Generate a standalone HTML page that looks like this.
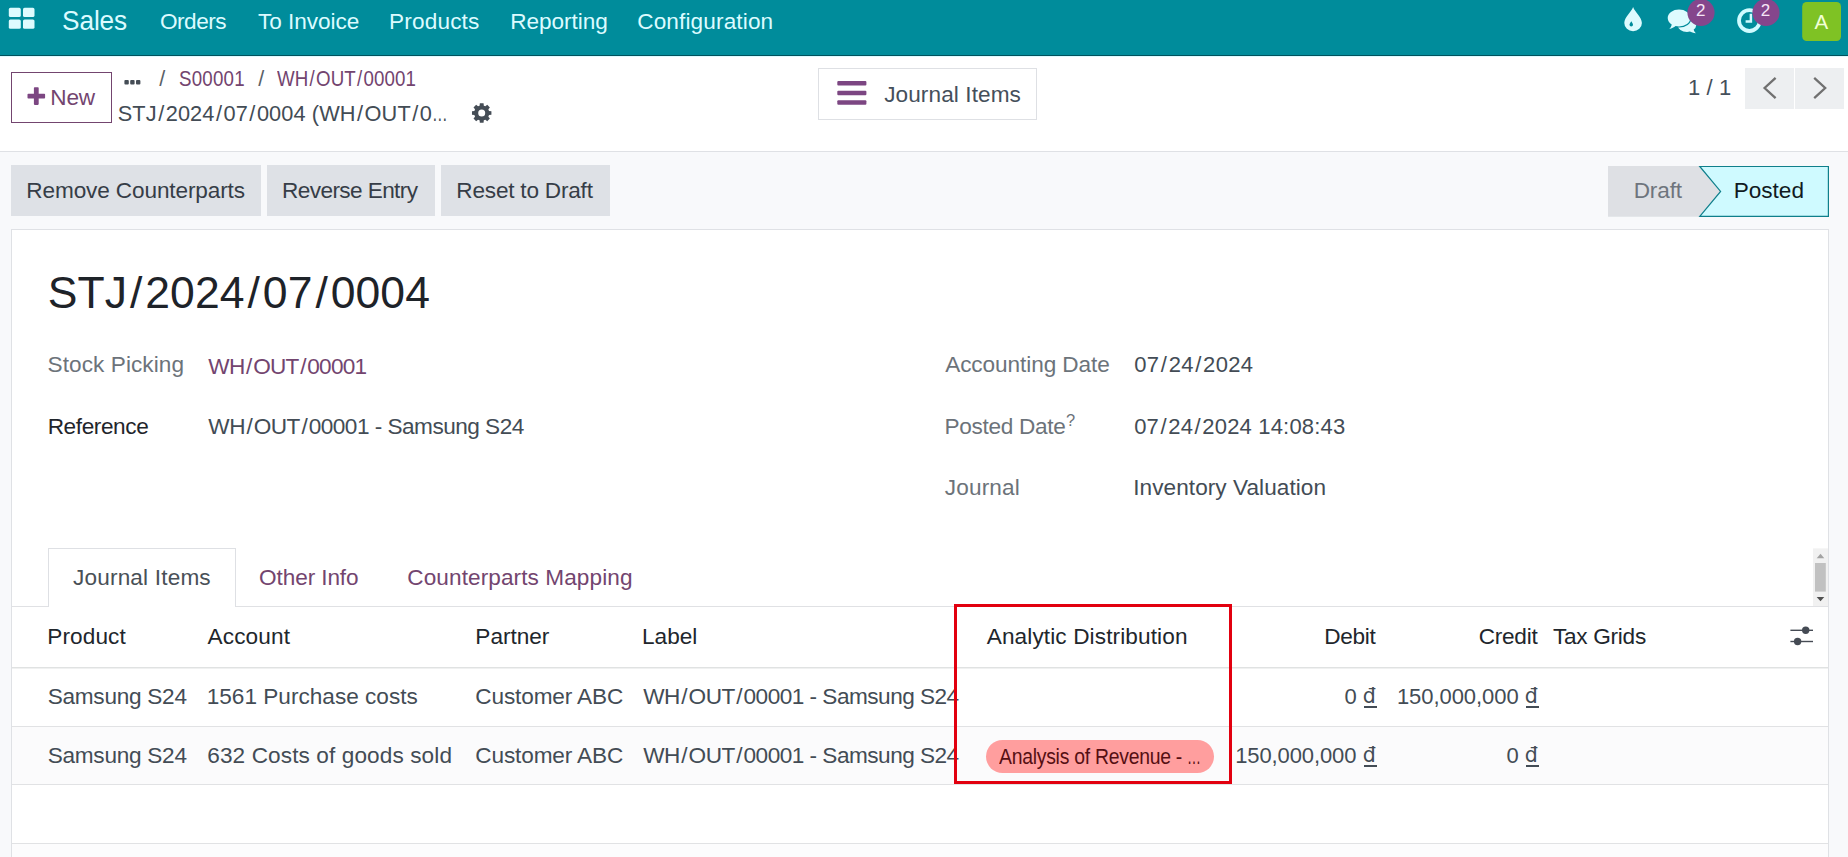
<!DOCTYPE html>
<html lang="en"><head><meta charset="utf-8"><title>STJ/2024/07/0004 - Odoo</title>
<style>
html,body{margin:0;padding:0}
body{width:1848px;height:857px;overflow:hidden;position:relative;background:#f8f9fb;font-family:"Liberation Sans","DejaVu Sans",sans-serif}
.t{position:absolute;white-space:nowrap;display:block;margin:0;font-weight:400;text-decoration:none}
.t i{font-style:normal;margin:0 .067em}
.t b{font-weight:400;display:inline-block;transform:scaleX(.72);transform-origin:0 50%;margin-right:-.28em}
.b{position:absolute;box-sizing:border-box}
svg{position:absolute;overflow:visible}
</style></head><body>
<!-- ===== navbar ===== -->
<div class="b" style="left:0;top:0;width:1848px;height:56px;background:#008c9b;border-bottom:1px solid #00525d"></div>
<svg style="left:0;top:0" width="1848" height="56" viewBox="0 0 1848 56">
  <!-- apps grid -->
  <g fill="#defbfe">
    <rect x="8.8" y="7.8" width="12" height="9.2" rx="1.6"/><rect x="23" y="7.8" width="11.5" height="9.2" rx="1.6"/>
    <rect x="8.8" y="19.5" width="12" height="9.3" rx="1.6"/><rect x="23" y="19.5" width="11.5" height="9.3" rx="1.6"/>
  </g>
  <!-- drop -->
  <path fill="#defbfe" fill-rule="evenodd" d="M1633.1 6.9 C1634.8 12 1641.9 17.2 1641.9 22.9 A8.8 8.3 0 0 1 1624.3 22.9 C1624.3 17.2 1631.4 12 1633.1 6.9 Z M1631.3 21.2 C1632.2 22.8 1633 23.6 1633 24.7 A1.75 1.75 0 0 1 1629.5 24.7 C1629.5 23.6 1630.4 22.8 1631.3 21.2 Z"/>
  <!-- comments -->
  <g fill="#defbfe">
    <path d="M1687 18 A9.3 7 0 0 1 1696.3 25 A6.6 6.6 0 0 1 1693.7 29.6 C1693.9 31 1694.7 32.2 1695.8 33.2 C1693.4 33.1 1691.4 32.4 1689.9 31.6 C1689 31.9 1688 32 1687 32 A9.3 7 0 0 1 1677.7 25 A9.3 7 0 0 1 1687 18 Z"/>
    <path stroke="#008c9b" stroke-width="2.4" paint-order="stroke" d="M1679 9.6 A11.3 8.4 0 0 1 1690.3 18 A11.3 8.4 0 0 1 1679 26.4 C1677.8 26.4 1676.7 26.3 1675.6 26.1 C1673.9 27.6 1671.8 28.6 1669.3 29 C1670.6 27.7 1671.4 26.2 1671.7 24.5 A8 8 0 0 1 1667.7 18 A11.3 8.4 0 0 1 1679 9.6 Z"/>
  </g>
  <!-- clock -->
  <circle cx="1749.4" cy="20.6" r="10.4" fill="none" stroke="#cffbff" stroke-width="3.8"/>
  <path d="M1750.9 13.8 V21.6 H1745.6" fill="none" stroke="#cffbff" stroke-width="2.5"/>
  <!-- badges -->
  <circle cx="1701" cy="12.5" r="13.6" fill="#85468c"/>
  <circle cx="1766" cy="12.5" r="13.6" fill="#85468c"/>
  <!-- avatar -->
  <rect x="1802.2" y="2" width="38.8" height="39" rx="4.5" fill="#7fc224"/>
</svg>
<!-- ===== control panel ===== -->
<div class="b" style="left:0;top:56px;width:1848px;height:96px;background:#fff;border-top:1px solid #dcfbff;border-bottom:1px solid #dfe1e5"></div>
<div class="b" style="left:11px;top:72px;width:101px;height:51px;border:1px solid #73456f;background:#fff"></div>
<div class="b" style="left:818px;top:68px;width:219px;height:52px;border:1px solid #dee0e4;background:#fff"></div>
<div class="b" style="left:1745px;top:68px;width:49px;height:41px;background:#edeff1"></div>
<div class="b" style="left:1795px;top:68px;width:49px;height:41px;background:#edeff1"></div>
<svg style="left:0;top:56px" width="1848" height="96" viewBox="0 56 1848 96">
  <!-- plus -->
  <path fill="#7c4682" d="M33.5 87.3 h4.8 a.8 .8 0 0 1 .8 .8 v5.6 h5.6 a.8 .8 0 0 1 .8 .8 v3.2 a.8 .8 0 0 1 -.8 .8 h-5.6 v5.6 a.8 .8 0 0 1 -.8 .8 h-3.2 a.8 .8 0 0 1 -.8 -.8 v-5.6 h-5.6 a.8 .8 0 0 1 -.8 -.8 v-3.2 a.8 .8 0 0 1 .8 -.8 h5.6 v-5.6 a.8 .8 0 0 1 .8 -.8 z" transform="translate(-0.4,0)"/>
  <!-- ellipsis -->
  <g fill="#454d56"><rect x="124.4" y="80" width="4.4" height="4.4" rx="1"/><rect x="130.2" y="80" width="4.4" height="4.4" rx="1"/><rect x="136" y="80" width="4.4" height="4.4" rx="1"/></g>
  <!-- gear -->
  <path fill="#454d56" fill-rule="evenodd" d="M479.58 105.70 L479.84 103.28 L483.56 103.28 L483.82 105.70 L485.36 106.34 L487.26 104.81 L489.89 107.44 L488.36 109.34 L489.00 110.88 L491.42 111.14 L491.42 114.86 L489.00 115.12 L488.36 116.66 L489.89 118.56 L487.26 121.19 L485.36 119.66 L483.82 120.30 L483.56 122.72 L479.84 122.72 L479.58 120.30 L478.04 119.66 L476.14 121.19 L473.51 118.56 L475.04 116.66 L474.40 115.12 L471.98 114.86 L471.98 111.14 L474.40 110.88 L475.04 109.34 L473.51 107.44 L476.14 104.81 L478.04 106.34 Z M478.20 113.00 a3.5 3.5 0 1 0 7.0 0 a3.5 3.5 0 1 0 -7.0 0 Z"/>
  <!-- hamburger -->
  <g fill="#7c4682"><rect x="837.3" y="81" width="29.1" height="4.5" rx="1"/><rect x="837.3" y="90.7" width="29.1" height="4.5" rx="1"/><rect x="837.3" y="100.3" width="29.1" height="4.5" rx="1"/></g>
  <!-- chevrons -->
  <path d="M1775.6 77.8 L1764.6 88 L1775.6 98.2" fill="none" stroke="#707070" stroke-width="2.3"/>
  <path d="M1814.2 77.8 L1825.2 88 L1814.2 98.2" fill="none" stroke="#707070" stroke-width="2.3"/>
</svg>
<!-- ===== status bar ===== -->
<div class="b" style="left:11px;top:165px;width:250px;height:51px;background:#dee1e6"></div>
<div class="b" style="left:267px;top:165px;width:168px;height:51px;background:#dee1e6"></div>
<div class="b" style="left:441px;top:165px;width:169px;height:51px;background:#dee1e6"></div>
<svg style="left:1600px;top:160px" width="240" height="64" viewBox="1600 160 240 64">
  <path d="M1608 166 H1700 L1721 191.4 L1700 216.7 H1608 Z" fill="#dee0e4"/>
  <path d="M1699.8 166.5 H1828.4 V216.3 H1699.8 L1720.6 191.4 Z" fill="#cffaff" stroke="#0f7f8b" stroke-width="1.2" stroke-linejoin="miter"/>
</svg>
<!-- ===== sheet ===== -->
<div class="b" style="left:11px;top:229px;width:1818px;height:640px;background:#fff;border:1px solid #dfe1e5"></div>
<!-- tab line + active tab -->
<div class="b" style="left:12px;top:606px;width:1816px;height:1px;background:#e0e1e4"></div>
<div class="b" style="left:48px;top:548px;width:188px;height:59px;background:#fff;border:1px solid #dee0e4;border-bottom:none"></div>
<!-- table lines -->
<div class="b" style="left:12px;top:667px;width:1816px;height:1px;background:#e0e2e2"></div>
<div class="b" style="left:12px;top:668px;width:1816px;height:1px;background:#f0f1f1"></div>
<div class="b" style="left:12px;top:726px;width:1816px;height:1px;background:#e1e2e4"></div>
<div class="b" style="left:12px;top:727px;width:1816px;height:57px;background:#fbfbfc"></div>
<div class="b" style="left:12px;top:784px;width:1816px;height:1px;background:#e1e2e4"></div>
<div class="b" style="left:12px;top:843px;width:1816px;height:14px;background:#fcfcfd;border-top:1px solid #e1e2e4"></div>
<!-- analytic pill -->
<div class="b" style="left:986px;top:740px;width:228px;height:33px;border-radius:17px;background:#ff9e9e"></div>
<!-- optional columns icon + scrollbar -->
<svg style="left:1780px;top:540px" width="60" height="120" viewBox="1780 540 60 120">
  <g stroke="#454b54" stroke-width="1.4" fill="#454b54">
    <path d="M1790.4 630.3 H1813" fill="none"/><circle cx="1805.7" cy="630.3" r="3.7" stroke="none"/>
    <path d="M1790.4 641.5 H1813" fill="none"/><circle cx="1797.6" cy="641.5" r="3.7" stroke="none"/>
  </g>
  <rect x="1813" y="548.4" width="15" height="57.6" fill="#f1f1f1"/>
  <rect x="1815" y="563" width="10.8" height="28.6" fill="#c1c1c1"/>
  <path d="M1816.7 558.2 L1820.5 553.8 L1824.3 558.2 Z" fill="#a3a3a3"/>
  <path d="M1816.7 596.9 L1820.5 601.3 L1824.3 596.9 Z" fill="#505050"/>
</svg>

<nav class="o_main_navbar">
<a class="t" style="left:62.16px;top:1.62px;font-size:28.5px;line-height:37px;letter-spacing:-0.106px;color:#dcfbff;transform:scaleX(0.92);transform-origin:0 0">Sales</a>
<a class="t" style="left:160.07px;top:6.67px;font-size:22.6px;line-height:29px;letter-spacing:-0.527px;color:#dcfbff">Orders</a>
<a class="t" style="left:257.92px;top:6.67px;font-size:22.6px;line-height:29px;letter-spacing:-0.022px;color:#dcfbff">To Invoice</a>
<a class="t" style="left:389.07px;top:6.67px;font-size:22.6px;line-height:29px;letter-spacing:0.155px;color:#dcfbff">Products</a>
<a class="t" style="left:510.32px;top:6.67px;font-size:22.6px;line-height:29px;letter-spacing:-0.054px;color:#dcfbff">Reporting</a>
<a class="t" style="left:637.24px;top:6.67px;font-size:22.6px;line-height:29px;letter-spacing:0.127px;color:#dcfbff">Configuration</a>
<span class="t" style="left:1814.38px;top:8.39px;font-size:20.5px;line-height:27px;letter-spacing:0.000px;color:#f2ffd6">A</span>
<span class="t" style="left:1695.96px;top:0.31px;font-size:17px;line-height:22px;letter-spacing:0.000px;color:#f6e6f7">2</span>
<span class="t" style="left:1760.86px;top:0.31px;font-size:17px;line-height:22px;letter-spacing:0.000px;color:#f6e6f7">2</span>
</nav>
<header class="o_control_panel">
<a class="t" style="left:50.37px;top:82.67px;font-size:22.6px;line-height:29px;letter-spacing:-0.204px;color:#73456f">New</a>
<span class="t" style="left:159.30px;top:64.55px;font-size:21.5px;line-height:28px;letter-spacing:0.000px;color:#5a6168">/</span>
<a class="t" style="left:179.42px;top:64.55px;font-size:21.5px;line-height:28px;letter-spacing:0.252px;color:#73456f;transform:scaleX(0.87);transform-origin:0 0">S00001</a>
<span class="t" style="left:258.30px;top:64.55px;font-size:21.5px;line-height:28px;letter-spacing:0.000px;color:#5a6168">/</span>
<a class="t" style="left:276.85px;top:64.55px;font-size:21.5px;line-height:28px;letter-spacing:0.087px;color:#73456f;transform:scaleX(0.87);transform-origin:0 0">WH<i>/</i>OUT<i>/</i>00001</a>
<span class="t" style="left:117.74px;top:100.46px;font-size:21.75px;line-height:28px;letter-spacing:0.089px;color:#434c55">STJ<i>/</i>2024<i>/</i>07<i>/</i>0004 (WH<i>/</i>OUT<i>/</i>0<b>…</b></span>
<span class="t" style="left:884.14px;top:79.67px;font-size:22.6px;line-height:29px;letter-spacing:0.097px;color:#454f5b">Journal Items</span>
<span class="t" style="left:1687.92px;top:72.87px;font-size:22px;line-height:29px;letter-spacing:-0.632px;color:#454f5b">1 <i>/</i> 1</span>
</header>
<div class="o_form_statusbar">
<span class="t" style="left:26.37px;top:175.67px;font-size:22.6px;line-height:29px;letter-spacing:-0.131px;color:#363d47">Remove Counterparts</span>
<span class="t" style="left:282.07px;top:175.67px;font-size:22.6px;line-height:29px;letter-spacing:-0.600px;color:#363d47">Reverse Entry</span>
<span class="t" style="left:456.37px;top:175.67px;font-size:22.6px;line-height:29px;letter-spacing:-0.214px;color:#363d47">Reset to Draft</span>
<span class="t" style="left:1633.70px;top:175.67px;font-size:22.6px;line-height:29px;letter-spacing:-0.141px;color:#6e757d">Draft</span>
<span class="t" style="left:1733.65px;top:175.67px;font-size:22.6px;line-height:29px;letter-spacing:0.001px;color:#111a22">Posted</span>
</div>
<div class="oe_title">
<h1 class="t" style="left:47.74px;top:263.57px;font-size:44.5px;line-height:58px;letter-spacing:0.042px;color:#1e2329">STJ<i>/</i>2024<i>/</i>07<i>/</i>0004</h1>
</div>
<div class="o_group">
<span class="t" style="left:47.60px;top:349.67px;font-size:22.6px;line-height:29px;letter-spacing:0.063px;color:#6c737a">Stock Picking</span>
<a class="t" style="left:208.36px;top:351.67px;font-size:22.6px;line-height:29px;letter-spacing:-0.727px;color:#73456f">WH<i>/</i>OUT<i>/</i>00001</a>
<span class="t" style="left:47.65px;top:411.67px;font-size:22.6px;line-height:29px;letter-spacing:-0.389px;color:#1f252b">Reference</span>
<span class="t" style="left:208.36px;top:411.67px;font-size:22.6px;line-height:29px;letter-spacing:-0.513px;color:#434c55">WH<i>/</i>OUT<i>/</i>00001 - Samsung S24</span>
<span class="t" style="left:945.16px;top:349.67px;font-size:22.6px;line-height:29px;letter-spacing:-0.082px;color:#6c737a">Accounting Date</span>
<span class="t" style="left:1134.19px;top:349.87px;font-size:22px;line-height:29px;letter-spacing:0.304px;color:#434c55">07<i>/</i>24<i>/</i>2024</span>
<span class="t" style="left:944.39px;top:411.67px;font-size:22.6px;line-height:29px;letter-spacing:-0.293px;color:#6c737a">Posted Date</span>
<span class="t" style="left:1065.93px;top:409.78px;font-size:16.5px;line-height:21px;letter-spacing:0.000px;color:#6c737a">?</span>
<span class="t" style="left:1134.19px;top:411.87px;font-size:22px;line-height:29px;letter-spacing:0.179px;color:#434c55">07<i>/</i>24<i>/</i>2024 14:08:43</span>
<span class="t" style="left:944.80px;top:472.67px;font-size:22.6px;line-height:29px;letter-spacing:0.156px;color:#6c737a">Journal</span>
<span class="t" style="left:1133.29px;top:472.67px;font-size:22.6px;line-height:29px;letter-spacing:0.053px;color:#434c55">Inventory Valuation</span>
</div>
<div class="o_notebook_headers">
<span class="t" style="left:73.01px;top:562.67px;font-size:22.6px;line-height:29px;letter-spacing:0.171px;color:#495057">Journal Items</span>
<a class="t" style="left:259.07px;top:562.67px;font-size:22.6px;line-height:29px;letter-spacing:-0.104px;color:#73456f">Other Info</a>
<a class="t" style="left:407.28px;top:562.67px;font-size:22.6px;line-height:29px;letter-spacing:0.089px;color:#73456f">Counterparts Mapping</a>
</div>
<div class="o_list_header">
<span class="t" style="left:47.37px;top:621.67px;font-size:22.6px;line-height:29px;letter-spacing:0.084px;color:#21262c">Product</span>
<span class="t" style="left:207.46px;top:621.67px;font-size:22.6px;line-height:29px;letter-spacing:0.156px;color:#21262c">Account</span>
<span class="t" style="left:475.32px;top:621.67px;font-size:22.6px;line-height:29px;letter-spacing:-0.001px;color:#21262c">Partner</span>
<span class="t" style="left:642.07px;top:621.67px;font-size:22.6px;line-height:29px;letter-spacing:-0.029px;color:#21262c">Label</span>
<span class="t" style="left:986.74px;top:621.67px;font-size:22.6px;line-height:29px;letter-spacing:0.116px;color:#21262c">Analytic Distribution</span>
<span class="t" style="left:1324.32px;top:621.67px;font-size:22.6px;line-height:29px;letter-spacing:-0.350px;color:#21262c">Debit</span>
<span class="t" style="left:1478.67px;top:621.67px;font-size:22.6px;line-height:29px;letter-spacing:-0.233px;color:#21262c">Credit</span>
<span class="t" style="left:1553.00px;top:621.67px;font-size:22.6px;line-height:29px;letter-spacing:-0.278px;color:#21262c">Tax Grids</span>
</div>
<div class="o_data_row">
<span class="t" style="left:47.70px;top:681.67px;font-size:22.6px;line-height:29px;letter-spacing:-0.264px;color:#434c55">Samsung S24</span>
<span class="t" style="left:206.72px;top:681.67px;font-size:22.6px;line-height:29px;letter-spacing:0.003px;color:#434c55">1561 Purchase costs</span>
<span class="t" style="left:475.35px;top:681.67px;font-size:22.6px;line-height:29px;letter-spacing:-0.138px;color:#434c55">Customer ABC</span>
<span class="t" style="left:643.18px;top:681.67px;font-size:22.6px;line-height:29px;letter-spacing:-0.510px;color:#434c55">WH<i>/</i>OUT<i>/</i>00001 - Samsung S24</span>
<span class="t" style="left:1344.43px;top:681.87px;font-size:22px;line-height:29px;letter-spacing:0.000px;color:#434c55">0</span>
<span class="t" style="left:1362.84px;top:683.40px;font-size:20.5px;line-height:27px;letter-spacing:0.000px;color:#434c55;clip-path:inset(0 0 6.7px 0);font-family:'DejaVu Sans',sans-serif">₫</span>
<span class="t" style="left:1396.89px;top:681.87px;font-size:22px;line-height:29px;letter-spacing:-0.056px;color:#434c55">150,000,000</span>
<span class="t" style="left:1524.84px;top:683.40px;font-size:20.5px;line-height:27px;letter-spacing:0.000px;color:#434c55;clip-path:inset(0 0 6.7px 0);font-family:'DejaVu Sans',sans-serif">₫</span>
</div>
<div class="o_data_row">
<span class="t" style="left:47.70px;top:740.67px;font-size:22.6px;line-height:29px;letter-spacing:-0.264px;color:#434c55">Samsung S24</span>
<span class="t" style="left:207.28px;top:740.67px;font-size:22.6px;line-height:29px;letter-spacing:0.105px;color:#434c55">632 Costs of goods sold</span>
<span class="t" style="left:475.35px;top:740.67px;font-size:22.6px;line-height:29px;letter-spacing:-0.138px;color:#434c55">Customer ABC</span>
<span class="t" style="left:643.18px;top:740.67px;font-size:22.6px;line-height:29px;letter-spacing:-0.510px;color:#434c55">WH<i>/</i>OUT<i>/</i>00001 - Samsung S24</span>
<span class="t" style="left:998.85px;top:742.55px;font-size:21.5px;line-height:28px;letter-spacing:-0.274px;color:#560f13;transform:scaleX(0.9);transform-origin:0 0">Analysis of Revenue - <b>…</b></span>
<span class="t" style="left:1235.23px;top:740.87px;font-size:22px;line-height:29px;letter-spacing:-0.109px;color:#434c55">150,000,000</span>
<span class="t" style="left:1362.84px;top:742.40px;font-size:20.5px;line-height:27px;letter-spacing:0.000px;color:#434c55;clip-path:inset(0 0 6.7px 0);font-family:'DejaVu Sans',sans-serif">₫</span>
<span class="t" style="left:1506.53px;top:740.87px;font-size:22px;line-height:29px;letter-spacing:0.000px;color:#434c55">0</span>
<span class="t" style="left:1524.84px;top:742.40px;font-size:20.5px;line-height:27px;letter-spacing:0.000px;color:#434c55;clip-path:inset(0 0 6.7px 0);font-family:'DejaVu Sans',sans-serif">₫</span>
</div>
<div class="b" style="left:1364.0px;top:706.1px;width:12.6px;height:1.6px;background:#434c55"></div>
<div class="b" style="left:1526.0px;top:706.1px;width:12.7px;height:1.6px;background:#434c55"></div>
<div class="b" style="left:1364.0px;top:765.1px;width:12.6px;height:1.6px;background:#434c55"></div>
<div class="b" style="left:1526.0px;top:765.1px;width:12.7px;height:1.6px;background:#434c55"></div>
<!-- highlight annotation -->
<div class="b" style="left:954px;top:604px;width:278px;height:180px;border:3px solid #e2000f"></div>

</body></html>
